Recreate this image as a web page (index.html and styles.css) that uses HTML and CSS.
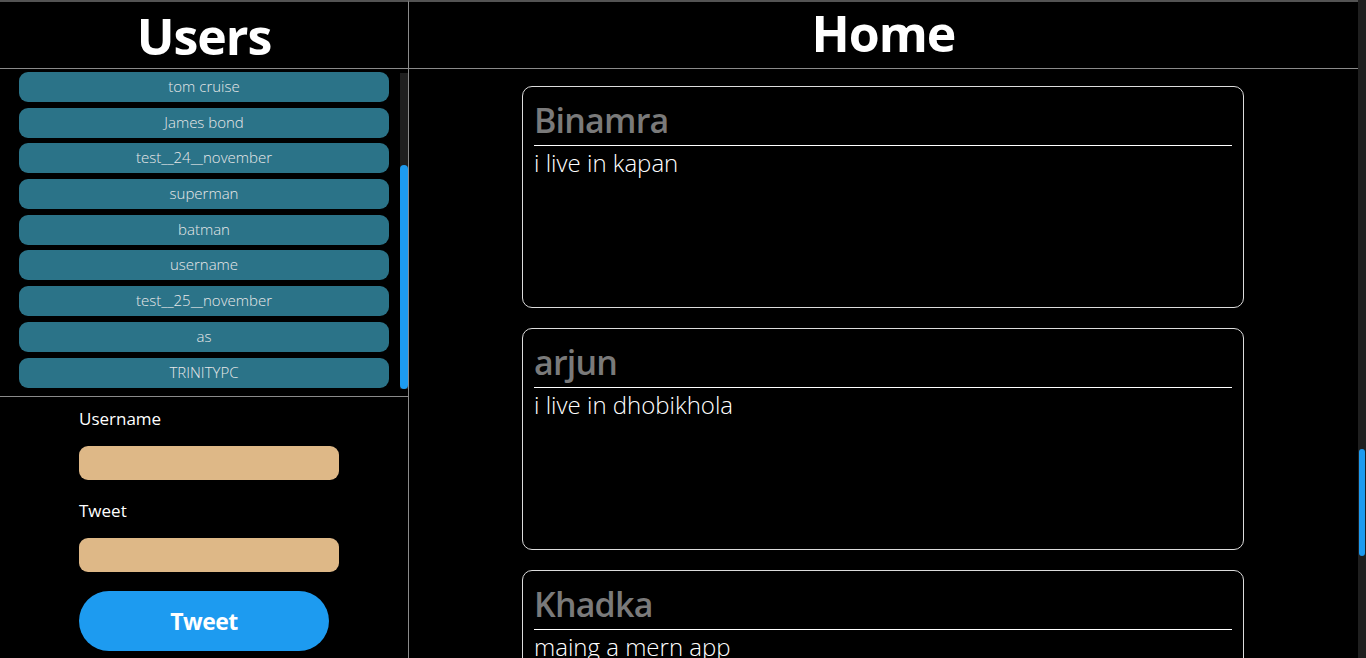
FILE: index.html
```html
<!DOCTYPE html>
<html lang="en">
<head>
<meta charset="utf-8">
<title>Tweets</title>
<link rel="stylesheet" href="styles.css">
</head>
<body>
<div class="app">
  <aside class="sidebar">
    <header class="head head-users"><h1>Users</h1></header>
    <div class="users-wrap">
      <ul class="users">
        <li>tom cruise</li>
        <li>James bond</li>
        <li>test__24__november</li>
        <li>superman</li>
        <li>batman</li>
        <li>username</li>
        <li>test__25__november</li>
        <li>as</li>
        <li>TRINITYPC</li>
      </ul>
      <div class="list-track"><div class="list-thumb"></div></div>
    </div>
    <form class="tweet-form">
      <label class="field-label" for="username">Username</label>
      <input class="field" id="username" type="text">
      <label class="field-label label-tweet" for="tweet">Tweet</label>
      <input class="field" id="tweet" type="text">
      <button class="tweet-btn" type="button">Tweet</button>
    </form>
  </aside>
  <main class="feed">
    <header class="head head-home"><h1>Home</h1></header>
    <div class="posts">
      <article class="post">
        <h2>Binamra</h2>
        <hr>
        <p>i live in kapan</p>
      </article>
      <article class="post">
        <h2>arjun</h2>
        <hr>
        <p>i live in dhobikhola</p>
      </article>
      <article class="post">
        <h2>Khadka</h2>
        <hr>
        <p>maing a mern app</p>
      </article>
    </div>
  </main>
  <div class="page-scroll"><div class="page-thumb"></div></div>
</div>
</body>
</html>
```

FILE: styles.css
```css
* { box-sizing: border-box; }
html, body { margin: 0; height: 100%; }
body {
  background: #000;
  color: #fff;
  font-family: "Open Sans", "Noto Sans", sans-serif;
  overflow: hidden;
}
.app {
  display: flex;
  height: 658px;
}
.sidebar {
  width: 409px;
  flex-shrink: 0;
  border-top: 2px solid #535353;
  border-right: 1px solid #8a8a8a;
  display: flex;
  flex-direction: column;
}
.feed {
  flex: 1;
  min-width: 0;
  border-top: 2px solid #535353;
  display: flex;
  flex-direction: column;
  overflow: hidden;
}
.head {
  height: 67px;
  flex-shrink: 0;
  border-bottom: 1px solid #8a8a8a;
  display: flex;
  justify-content: center;
}
.head h1 {
  margin: 0;
  font-size: 50px;
  line-height: 1;
  font-weight: 700;
  letter-spacing: -1px;
}
.head-users h1 { padding-top: 9px; }
.head-home h1 { padding-top: 6px; }

.users-wrap {
  height: 328px;
  flex-shrink: 0;
  border-bottom: 1px solid #8a8a8a;
  display: flex;
}
.users {
  flex: 1;
  list-style: none;
  margin: 0;
  padding: 3px 11px 0 19px;
  display: flex;
  flex-direction: column;
  gap: 5.7px;
}
.users li {
  height: 30px;
  flex-shrink: 0;
  background: #2b7388;
  border-radius: 9px;
  color: #e8e8e8;
  font-size: 15px;
  font-weight: 300;
  line-height: 28px;
  text-align: center;
}
.list-track {
  width: 8px;
  flex-shrink: 0;
  margin: 4px 0 7px;
  background: #1f1f1f;
}
.list-thumb {
  margin-top: 92px;
  width: 100%;
  height: 224px;
  border-radius: 4px;
  background: #1d9bf0;
}

.tweet-form {
  padding: 11px 0 0 79px;
  display: flex;
  flex-direction: column;
  align-items: flex-start;
}
.field-label {
  font-size: 17px;
  font-weight: 500;
  line-height: 22px;
  color: #fff;
}
.label-tweet { margin-top: 20px; }
.field {
  margin-top: 16px;
  width: 260px;
  height: 34px;
  border: none;
  border-radius: 9px;
  background: #deb887;
  outline: none;
}
.tweet-btn {
  margin-top: 19px;
  width: 250px;
  height: 60px;
  border: none;
  border-radius: 30px;
  background: #1d9bf0;
  color: #fff;
  font-family: inherit;
  font-size: 23px;
  font-weight: 700;
  letter-spacing: -0.5px;
}

.posts {
  padding: 17px 1px 0 0;
  display: flex;
  flex-direction: column;
  align-items: center;
  gap: 20px;
}
.post {
  width: 722px;
  height: 222px;
  flex-shrink: 0;
  border: 1px solid #dcdcdc;
  border-radius: 10px;
  padding: 0 11px;
}
.post h2 {
  margin: 13px 0 0;
  font-size: 34px;
  line-height: 40px;
  font-weight: 600;
  letter-spacing: -0.8px;
  color: #7a7a7a;
}
.post hr {
  margin: 5px 0 0;
  border: none;
  border-top: 1px solid #fff;
  height: 0;
}
.post p {
  margin: 0;
  font-size: 24px;
  line-height: 34px;
  font-weight: 300;
  color: #fff;
}

.page-scroll {
  width: 8px;
  flex-shrink: 0;
  background: #1f1f1f;
}
.page-thumb {
  margin: 449px 0 0 1px;
  width: 6px;
  height: 107px;
  border-radius: 3px;
  background: #1d9bf0;
}
```
